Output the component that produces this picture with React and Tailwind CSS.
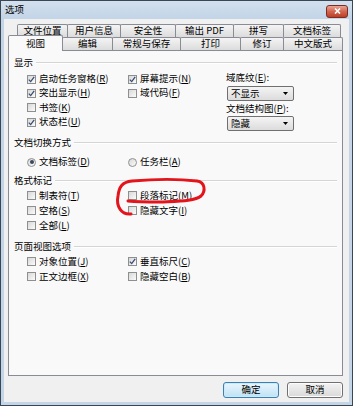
import React from "react";

const K = ({ c }) => (
  <>
    (<span className="underline">{c}</span>)
  </>
);

function Box({ checked }) {
  return (
    <span className="w-[9px] h-[9px] shrink-0 border border-[#8e8f8f] bg-gradient-to-br from-[#d8d8d8] to-[#fbfbfb] flex items-center justify-center">
      {checked && (
        <svg width="7" height="7" viewBox="0 0 7 7">
          <path d="M0.8 3.6 L2.7 5.6 L6.2 0.9" stroke="#384d70" strokeWidth="1.3" fill="none" />
        </svg>
      )}
    </span>
  );
}

function Radio({ checked }) {
  return (
    <span className="w-[9px] h-[9px] shrink-0 rounded-full border border-[#8e8f8f] bg-gradient-to-br from-[#d8d8d8] to-[#fbfbfb] flex items-center justify-center">
      {checked && <span className="w-[4px] h-[4px] rounded-full bg-[#3a4a5e]" />}
    </span>
  );
}

function Check({ checked, label, k, h }) {
  return (
    <div className={`flex items-center ${h}`}>
      <Box checked={checked} />
      <span className="ml-[3px] leading-none whitespace-nowrap">
        {label}
        <K c={k} />
      </span>
    </div>
  );
}

function Header({ t }) {
  return (
    <div className="h-[14px] flex items-center pl-[5px] pr-[5px]">
      <span className="leading-none whitespace-nowrap">{t}</span>
      <div className="flex-1 ml-[3px] h-[2px] border-t border-b border-t-[#d5d5d5] border-b-white" />
    </div>
  );
}

function Select({ v }) {
  return (
    <div className="w-[67px] h-[15px] ml-[1px] border border-[#707070] rounded-[2px] bg-gradient-to-b from-[#f4f4f4] to-[#dcdcdc] flex items-center justify-between pl-[3px] pr-[5px]">
      <span className="leading-none">{v}</span>
      <svg width="5" height="3" viewBox="0 0 5 3">
        <path d="M0 0 H5 L2.5 3 Z" fill="#000" />
      </svg>
    </div>
  );
}

function Tab({ w, children, first }) {
  return (
    <div
      className={`h-[13px] border border-b-0 border-[#898c95] rounded-t-[2px] bg-gradient-to-b from-[#f4f4f4] to-[#dcdcdc] flex items-center justify-center leading-none whitespace-nowrap ${first ? "" : "-ml-px"}`}
      style={{ width: w }}
    >
      {children}
    </div>
  );
}

export default function App() {
  return (
    <div className="relative w-[353px] h-[406px] border border-[#3a4654] bg-[#c4d5e8] flex flex-col text-[9.5px] text-black font-['Noto_Sans_CJK_SC','Noto_Sans',sans-serif]">
      {/* Title bar */}
      <div className="h-[18px] flex items-center justify-between pl-[4px] pr-[4px] bg-gradient-to-b from-[#d3e0ee] to-[#c2d4e7]">
        <span className="leading-none">选项</span>
        <div className="w-[22px] h-[13px] mt-[2px] rounded-[3px] border border-[#7a2e25] bg-gradient-to-b from-[#e9a493] via-[#d2654f] to-[#bd3d28] flex items-center justify-center">
          <svg width="7" height="6" viewBox="0 0 7 6">
            <path d="M1 0.5 L6 5.5 M6 0.5 L1 5.5" stroke="#fff" strokeWidth="1.6" />
          </svg>
        </div>
      </div>

      {/* Body */}
      <div className="flex-1 mx-[3px] mb-[3px] bg-[#f0f0f0] pl-[4px] pr-[6px] pt-[5px] flex flex-col">
        {/* Tab row 1 */}
        <div className="flex ml-[9px]">
          <Tab w={51} first>文件位置</Tab>
          <Tab w={54}>用户信息</Tab>
          <Tab w={56}>安全性</Tab>
          <Tab w={59}>输出 PDF</Tab>
          <Tab w={51}>拼写</Tab>
          <Tab w={58}>文档标签</Tab>
        </div>
        {/* Tab row 2 */}
        <div className="flex h-[13px] relative z-10">
          <div className="relative z-10 w-[55px] h-[16px] -mt-[2px] border border-b-0 border-[#898c95] rounded-t-[2px] bg-[#f9f9f9] flex items-center justify-center leading-none">
            视图
          </div>
          <Tab w={51}>编辑</Tab>
          <Tab w={69}>常规与保存</Tab>
          <Tab w={61}>打印</Tab>
          <Tab w={44}>修订</Tab>
          <Tab w={60}>中文版式</Tab>
        </div>

        {/* Panel */}
        <div className="h-[326px] border border-[#898c95] bg-[#f9f9f9] pt-[5px]">
          <Header t="显示" />
          <div className="h-[66px] flex pl-[18px]">
            <div className="w-[101px] pt-[2px]">
              <Check checked label="启动任务窗格" k="R" h="h-[14px]" />
              <Check checked label="突出显示" k="H" h="h-[14px]" />
              <Check label="书签" k="K" h="h-[15px]" />
              <Check checked label="状态栏" k="U" h="h-[14px]" />
            </div>
            <div className="w-[98px] pt-[2px]">
              <Check checked label="屏幕提示" k="N" h="h-[14px]" />
              <Check label="域代码" k="F" h="h-[14px]" />
            </div>
            <div className="flex flex-col">
              <div className="h-[14px] mt-[1px] flex items-center leading-none whitespace-nowrap">
                域底纹<K c="E" />:
              </div>
              <div className="mt-[1px]">
                <Select v="不显示" />
              </div>
              <div className="h-[14px] mt-[1px] flex items-center leading-none whitespace-nowrap">
                文档结构图<K c="P" />:
              </div>
              <Select v="隐藏" />
            </div>
          </div>

          <Header t="文档切换方式" />
          <div className="h-[24px] flex pl-[18px] pt-[5px]">
            <div className="w-[101px] h-[14px] flex items-center">
              <Radio checked />
              <span className="ml-[3px] leading-none">
                文档标签<K c="D" />
              </span>
            </div>
            <div className="h-[14px] flex items-center">
              <Radio />
              <span className="ml-[3px] leading-none">
                任务栏<K c="A" />
              </span>
            </div>
          </div>

          <Header t="格式标记" />
          <div className="h-[52px] flex pl-[18px]">
            <div className="w-[101px]">
              <Check label="制表符" k="T" h="h-[15px]" />
              <Check label="空格" k="S" h="h-[15px]" />
              <Check label="全部" k="L" h="h-[15px]" />
            </div>
            <div>
              <Check label="段落标记" k="M" h="h-[15px]" />
              <Check label="隐藏文字" k="I" h="h-[15px]" />
            </div>
          </div>

          <Header t="页面视图选项" />
          <div className="flex pl-[18px]">
            <div className="w-[101px]">
              <Check label="对象位置" k="J" h="h-[15px]" />
              <Check label="正文边框" k="X" h="h-[15px]" />
            </div>
            <div>
              <Check checked label="垂直标尺" k="C" h="h-[15px]" />
              <Check label="隐藏空白" k="B" h="h-[15px]" />
            </div>
          </div>
        </div>

        {/* Buttons */}
        <div className="mt-[6px] flex justify-end gap-[8px]">
          <button className="w-[56px] h-[16px] rounded-[3px] border border-[#3c7fb1] bg-gradient-to-b from-[#eaf6fd] to-[#bfe2f5] shadow-[inset_0_0_0_1px_#c8ecfb] flex items-center justify-center leading-none">
            确定
          </button>
          <button className="w-[56px] h-[16px] rounded-[3px] border border-[#707070] bg-gradient-to-b from-[#f3f3f3] to-[#d9d9d9] shadow-[inset_0_0_0_1px_#fcfcfc] flex items-center justify-center leading-none">
            取消
          </button>
        </div>
      </div>

      {/* Red hand-drawn annotation */}
      <svg
        className="absolute left-[-1px] top-[-1px] pointer-events-none"
        width="353"
        height="406"
        viewBox="0 0 353 406"
      >
        <path
          d="M131 214 C121 215 116 206 118 196 C119 187 122 182 132 181 C155 179 180 179 197 181 C205 182 206 191 201 196 C195 201 180 201 160 202 C148 202 138 202 128 201"
          stroke="#e3141b"
          strokeWidth="3"
          fill="none"
          strokeLinecap="round"
        />
      </svg>
    </div>
  );
}
